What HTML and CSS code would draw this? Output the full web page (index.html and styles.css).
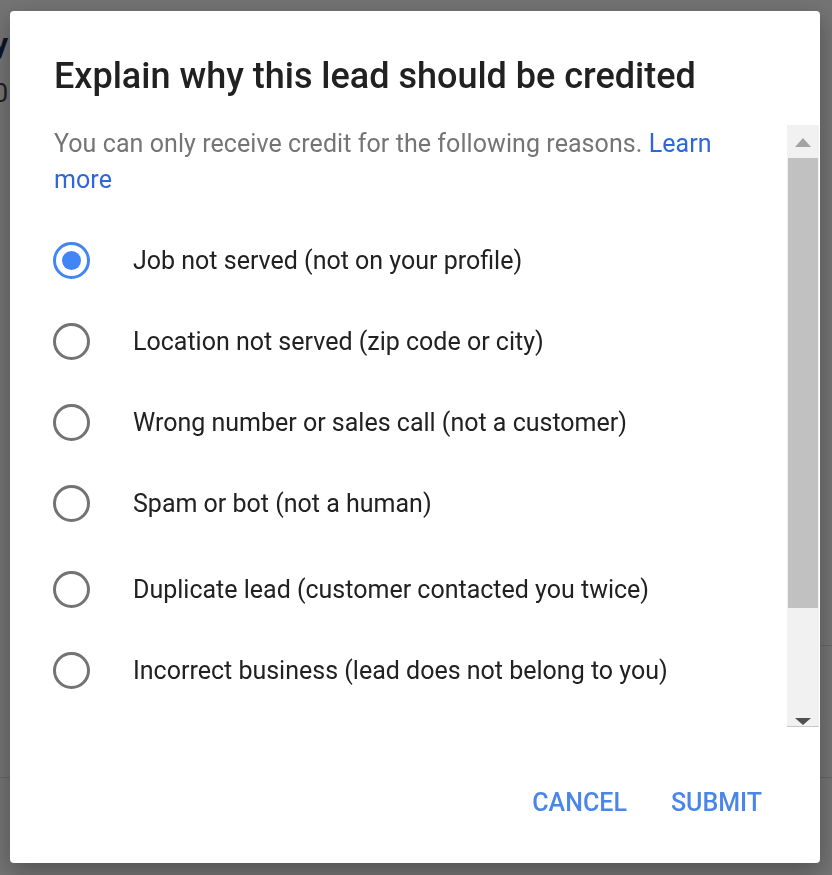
FILE: index.html
```html
<!DOCTYPE html>
<html lang="en">
<head>
  <meta charset="UTF-8" />
  <meta name="viewport" content="width=device-width, initial-scale=1.0" />
  <title>Lead credit</title>
  <link rel="stylesheet" href="styles.css">
</head>
<body>
<div id="page">
  <div class="page-title">Activity</div>
  <div class="page-sub">$0</div>
  <div class="page-rule rule-a"></div>
  <div class="page-rule rule-b"></div>
</div>
<div id="overlay">
  <div class="dialog">
    <h1 class="dialog-title">Explain why this lead should be credited</h1>
    <div class="dialog-scroll">
      <div class="dialog-body">
        <p class="intro">You can only receive credit for the following reasons. <a href="#">Learn more</a></p>
        <div class="options">
          <label class="option checked"><span class="radio"></span>Job not served (not on your profile)</label>
          <label class="option"><span class="radio"></span>Location not served (zip code or city)</label>
          <label class="option"><span class="radio"></span>Wrong number or sales call (not a customer)</label>
          <label class="option"><span class="radio"></span>Spam or bot (not a human)</label>
          <label class="option spaced"><span class="radio"></span>Duplicate lead (customer contacted you twice)</label>
          <label class="option"><span class="radio"></span>Incorrect business (lead does not belong to you)</label>
        </div>
      </div>
      <div class="scrollbar">
        <div class="sb-btn sb-up"><span class="tri-up"></span></div>
        <div class="sb-track"><div class="sb-thumb"></div></div>
        <div class="sb-btn sb-down"><span class="tri-down"></span></div>
      </div>
    </div>
    <div class="actions">
      <button>CANCEL</button>
      <button>SUBMIT</button>
    </div>
  </div>
</div>
</body>
</html>
```

FILE: styles.css
```css
* { box-sizing: border-box; margin: 0; padding: 0; }
html, body { width: 100%; height: 100%; overflow: hidden; font-family: Roboto, "Noto Sans", sans-serif; }
body { background: #f4f4f4; }

/* page behind the overlay */
#page { position: relative; height: 100%; }
.page-title {
  position: absolute; top: 26px; right: calc(100% - 8px);
  font-size: 30px; font-weight: 700; color: #1a2a5c; white-space: nowrap;
}
.page-sub {
  position: absolute; top: 78px; right: calc(100% - 8px);
  font-size: 26px; color: #444; white-space: nowrap;
}
.page-rule { position: absolute; left: 0; right: 0; height: 1px; background: #d6d6d6; }
.rule-a { top: 645px; left: 800px; }
.rule-b { top: 777px; }

#overlay {
  position: fixed; inset: 0;
  background: rgba(0,0,0,.53);
  padding: 11px 12px 12px 10px;
}
.dialog {
  width: 810px; height: 852px;
  background: #fff; border-radius: 4px;
  display: flex; flex-direction: column;
  box-shadow: 0 8px 24px rgba(0,0,0,.3);
}
.dialog-title {
  font-size: 36px; line-height: 44px; font-weight: 500; color: #212121;
  padding: 43px 44px 0;
  height: 114px;
  white-space: nowrap;
}
.dialog-scroll {
  height: 602px;
  display: flex;
  padding-right: 1px;
}
.dialog-body {
  flex: 1; overflow: hidden;
  padding: 1px 30px 0 44px;
}
.intro {
  font-size: 25px; line-height: 36px; color: #757575;
  letter-spacing: 0.07px;
  width: 700px;
}
.intro a { color: #2f67d9; text-decoration: none; }
.options { margin-top: 22px; padding-bottom: 160px; }
.option {
  display: flex; align-items: center; gap: 43px;
  height: 81px;
  font-size: 25px; color: #212121;
  cursor: pointer;
  white-space: nowrap;
}
.option.spaced { margin-top: 5px; }
.radio {
  width: 37px; height: 37px; flex: none;
  margin-left: -1px;
  border: 3px solid #737373; border-radius: 50%;
  display: flex; align-items: center; justify-content: center;
}
.option.checked .radio { border-color: #4285f4; }
.option.checked .radio::after {
  content: ""; width: 19px; height: 19px; border-radius: 50%; background: #4285f4;
}

.scrollbar {
  width: 32px; background: #f1f1f1;
  display: flex; flex-direction: column;
  border-bottom: 1px solid #c8c8c8;
}
.sb-btn { height: 33px; display: flex; justify-content: center; }
.sb-up { align-items: center; padding-top: 2px; }
.sb-down { align-items: flex-end; padding-bottom: 1px; }
.tri-up { border: 8px solid transparent; border-top: 0; border-bottom: 9px solid #a3a3a3; }
.tri-down { border: 8px solid transparent; border-bottom: 0; border-top: 7px solid #505050; }
.sb-track { flex: 1; padding: 0 1px; }
.sb-thumb { height: 450px; background: #c1c1c1; }

.actions {
  flex: 1;
  display: flex; justify-content: flex-end; align-items: flex-start; gap: 44px;
  padding: 61px 58px 0 0;
}
.actions button {
  font-family: inherit; font-size: 25px; line-height: 30px; font-weight: 500;
  color: #4a86e8; background: none; border: 0; cursor: pointer;
}
```
